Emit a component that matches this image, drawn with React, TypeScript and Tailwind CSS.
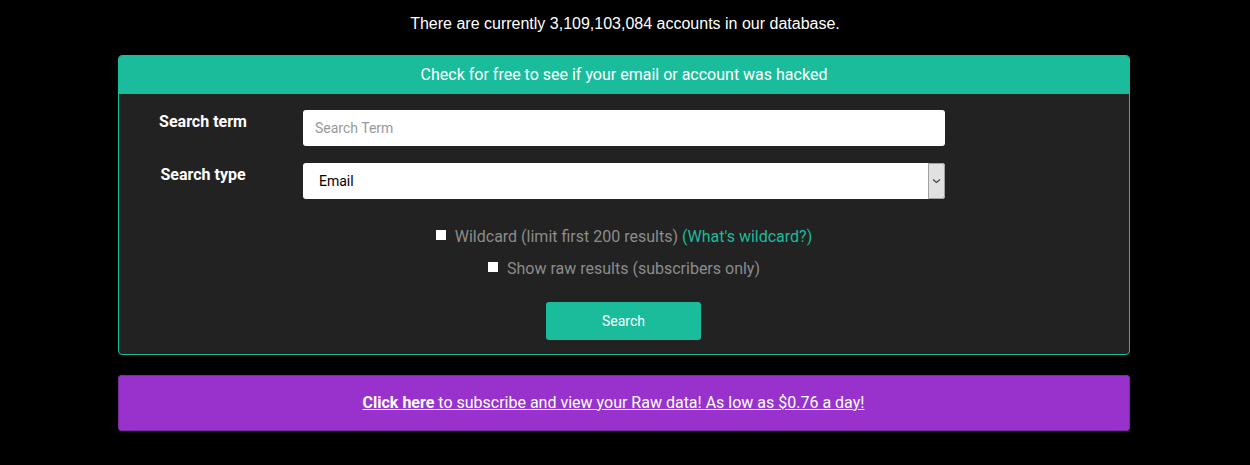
import React from "react";

export default function App() {
  return (
    <div className="min-h-[465px] w-full bg-black" style={{ fontFamily: "Roboto, 'Liberation Sans', sans-serif" }}>
      <div className="pt-[13px] text-center text-[16px] leading-[22px] text-white" style={{ fontFamily: "'Liberation Sans', Arial, sans-serif" }}>
        There are currently 3,109,103,084 accounts in our database.
      </div>
      <div className="ml-[118px] mt-[20px] w-[1012px]">
        <div className="overflow-hidden rounded-[4px] border border-[#1abc9c] bg-[#222222]">
          <div className="flex h-[38px] items-center justify-center bg-[#1abc9c] text-[16px] text-white">
            Check for free to see if your email or account was hacked
          </div>
          <div className="pt-[16px] pb-[14px]">
            <div className="flex h-[36px] items-start">
              <div className="w-[168px] pt-[2px] text-center text-[16px] font-bold leading-[20px] text-white">Search term</div>
              <div className="w-[672px] pl-[16px] pr-[14px]">
                <div className="flex h-[36px] items-center rounded-[3px] bg-white px-[12px] text-[14px] text-[#999999]">Search Term</div>
              </div>
            </div>
            <div className="mt-[17px] flex h-[36px] items-start">
              <div className="w-[168px] pt-[2px] text-center text-[16px] font-bold leading-[20px] text-white">Search type</div>
              <div className="w-[672px] pl-[16px] pr-[14px]">
                <div className="flex h-[36px] items-center rounded-[3px] bg-white text-[14px] text-black">
                  <span className="flex-1 pl-[16px]">Email</span>
                  <span className="flex h-[36px] w-[17px] items-center justify-center rounded-r-[3px] border border-[#a0a0a0] bg-[#e1e1e1]">
                    <svg width="9" height="6" viewBox="0 0 9 6">
                      <path d="M1 1.5 L4.5 4.5 L8 1.5" fill="none" stroke="#444" strokeWidth="1.2" />
                    </svg>
                  </span>
                </div>
              </div>
            </div>
            <div className="mt-[28px] flex items-center justify-center text-[16px] leading-[20px] text-[#8c8c8c]">
              <span className="mb-[4px] mr-[9px] inline-block h-[10px] w-[10px] bg-white" />
              <span>Wildcard (limit first 200 results) <span className="text-[#1abc9c]">(What's wildcard?)</span></span>
            </div>
            <div className="mt-[12px] flex items-center justify-center text-[16px] leading-[20px] text-[#8c8c8c]">
              <span className="mb-[4px] mr-[9px] inline-block h-[10px] w-[10px] bg-white" />
              <span>Show raw results (subscribers only)</span>
            </div>
            <div className="mt-[23px] flex justify-center pr-[1px]">
              <div className="flex h-[38px] w-[155px] items-center justify-center rounded-[3px] bg-[#1abc9c] text-[14px] text-white">Search</div>
            </div>
          </div>
        </div>
        <div className="mt-[20px] flex h-[56px] items-center justify-center rounded-[3px] border border-[#7a2aa3] bg-[#9932cc] pr-[21px] text-[16px] text-white">
          <span className="underline">
            <span className="font-bold">Click here</span> to subscribe and view your Raw data! As low as $0.76 a day!
          </span>
        </div>
      </div>
    </div>
  );
}
